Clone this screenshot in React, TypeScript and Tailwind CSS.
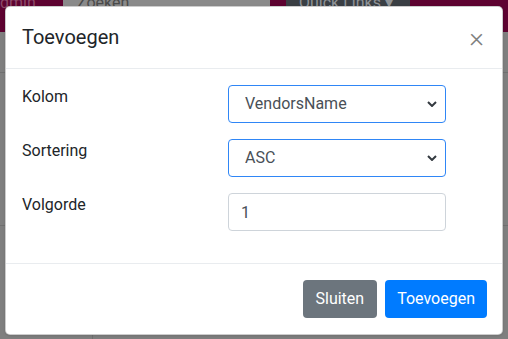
import React, { useState } from 'react';

const Chevron = () => (
  <svg width="10" height="6" viewBox="0 0 10 6" className="pointer-events-none absolute right-[9px] top-[16px]">
    <path d="M1 1l4 4 4-4" fill="none" stroke="#343a40" strokeWidth="2" />
  </svg>
);

const App: React.FC = () => {
  const [kolom, setKolom] = useState('VendorsName');
  const [sort, setSort] = useState('ASC');
  const [volgorde, setVolgorde] = useState('1');

  return (
    <div className="relative h-[339px] w-[508px] overflow-hidden bg-[#7f7f7f] font-['Roboto',sans-serif]">
      {/* page behind the backdrop */}
      <div className="flex h-[32px] items-start bg-[#5e0331]">
        <span className="-mt-[7px] w-[63px] text-[16px] leading-[20px] text-[#8c4a69]">dmin</span>
        <div className="-mt-[7px] h-[20px] w-[207px] bg-[#8a8a8a] pl-[14px] text-[16px] leading-[20px] text-[#4a4a4a]">Zoeken</div>
        <div className="ml-[16px] -mt-[7px] h-[20px] w-[124px] bg-[#3a3f44] pl-[13px] text-[16px] leading-[20px] text-[#8f9397]">Quick Links ▾</div>
      </div>
      <div className="mt-[40px] h-px bg-[#707070]" />
      <div className="mt-[152px] h-px bg-[#707070]" />
      <div className="ml-[92px] mt-[108px] h-[10px] w-px bg-[#707070]" />

      {/* modal */}
      <div className="absolute left-[5px] top-[6px] w-[498px] rounded-[5px] border border-black/20 bg-white shadow-sm">
        <div className="flex items-start justify-between border-b border-[#e9ecef] px-[16px] py-[15px]">
          <h5 className="text-[20px] leading-[30px] font-normal text-[#212529]">Toevoegen</h5>
          <button className="mt-[1px] mr-[2px] text-[28px] leading-[30px] font-light text-[#808080]">×</button>
        </div>

        <div className="flex flex-col gap-[16px] px-[16px] pt-[16px] pb-[32px]">
          <div className="flex">
            <label className="w-[206px] text-[16px] leading-[24px] text-[#212529]">Kolom</label>
            <div className="relative w-[218px]">
              <select
                value={kolom}
                onChange={(e) => setKolom(e.target.value)}
                className="h-[38px] w-full appearance-none rounded-[4px] border border-[#2f86f6] bg-white pl-[16px] text-[16px] text-[#495057] outline-none"
              >
                <option>VendorsName</option>
                <option>VendorsCode</option>
              </select>
              <Chevron />
            </div>
          </div>
          <div className="flex">
            <label className="w-[206px] text-[16px] leading-[24px] text-[#212529]">Sortering</label>
            <div className="relative w-[218px]">
              <select
                value={sort}
                onChange={(e) => setSort(e.target.value)}
                className="h-[38px] w-full appearance-none rounded-[4px] border border-[#2f86f6] bg-white pl-[16px] text-[16px] text-[#495057] outline-none"
              >
                <option>ASC</option>
                <option>DESC</option>
              </select>
              <Chevron />
            </div>
          </div>
          <div className="flex">
            <label className="w-[206px] text-[16px] leading-[24px] text-[#212529]">Volgorde</label>
            <input
              value={volgorde}
              onChange={(e) => setVolgorde(e.target.value)}
              className="h-[38px] w-[218px] rounded-[4px] border border-[#ced4da] px-[12px] text-[16px] text-[#495057] outline-none"
            />
          </div>
        </div>

        <div className="flex justify-end gap-[8px] border-t border-[#e9ecef] px-[15px] py-[16px]">
          <button className="h-[38px] rounded-[4px] bg-[#6c757d] px-[13px] text-[16px] text-white">Sluiten</button>
          <button className="h-[38px] rounded-[4px] bg-[#007bff] px-[12px] text-[16px] text-white">Toevoegen</button>
        </div>
      </div>
    </div>
  );
};

export default App;
